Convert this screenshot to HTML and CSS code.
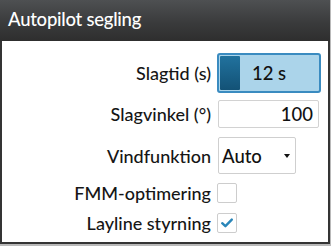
FILE: index.html
```html
<!DOCTYPE html>
<html lang="sv">
<head>
<meta charset="utf-8">
<title>Autopilot segling</title>
<link rel="stylesheet" href="styles.css">
</head>
<body>
<div class="panel">
  <div class="header">Autopilot segling</div>
  <div class="rows">
    <div class="row row-slider">
      <div class="label">Slagtid (s)</div>
      <div class="slider"><span class="handle"></span><span class="slider-value">12 s</span></div>
    </div>
    <div class="row row-num">
      <div class="label">Slagvinkel (°)</div>
      <div class="numbox">100</div>
    </div>
    <div class="row row-select">
      <div class="label">Vindfunktion</div>
      <div class="select"><span>Auto</span><span class="caret"></span></div>
    </div>
    <div class="row row-check">
      <div class="label">FMM-optimering</div>
      <div class="checkbox"></div>
    </div>
    <div class="row row-check row-last">
      <div class="label">Layline styrning</div>
      <div class="checkbox">
        <svg width="18" height="18" viewBox="0 0 18 18"><path d="M4.2 9.2 L7.4 12.2 L13.8 5.6" fill="none" stroke="#2a86b9" stroke-width="2.4" stroke-linecap="round" stroke-linejoin="round"/></svg>
      </div>
    </div>
  </div>
</div>
</body>
</html>
```

FILE: styles.css
```css
* { box-sizing: border-box; }
html, body { margin: 0; padding: 0; }
body {
  width: 331px;
  height: 246px;
  background: #b9b9b9;
  font-family: Lato, "Noto Sans", sans-serif;
  font-weight: 500;
  overflow: hidden;
}
.panel {
  width: 330px;
  height: 244px;
  background: #ffffff;
  border-left: 2px solid #343434;
  border-right: 2px solid #343434;
  border-bottom: 2px solid #343434;
}
.header {
  height: 41px;
  margin: 0 -2px;
  padding: 6px 0 0 8px;
  background: linear-gradient(#4e5052, #3a3b3c 55%, #2e2e2e);
  color: #ffffff;
  font-size: 18.5px;
  letter-spacing: -0.25px;
  line-height: 26px;
}
.rows {
  display: flex;
  flex-direction: column;
  gap: 9px;
  padding-top: 12px;
}
.row {
  display: flex;
  align-items: center;
  gap: 6px;
}
.row-num { margin-top: -2px; }
.row-last { margin-top: 1px; }
.label {
  width: 209px;
  text-align: right;
  color: #161616;
  font-size: 18px;
  line-height: 20px;
}
.slider {
  position: relative;
  width: 104px;
  height: 40px;
  border: 2px solid #3a8bc0;
  border-radius: 3px;
  background: #abd4ea;
  display: flex;
  align-items: center;
  justify-content: center;
  padding: 1px;
}
.handle {
  position: absolute;
  left: 1px;
  top: 1px;
  bottom: 1px;
  width: 20px;
  background: linear-gradient(#21729e, #135276);
  border-radius: 1px;
}
.slider-value {
  font-size: 18.5px;
  color: #111111;
}
.numbox {
  margin-left: 1px;
  width: 101px;
  height: 28px;
  border: 1px solid #d2d2d2;
  border-radius: 2px;
  background: #fff;
  text-align: right;
  padding-right: 5px;
  font-size: 18.5px;
  line-height: 26px;
  color: #111;
}
.select {
  margin-left: 1px;
  width: 78px;
  height: 37px;
  border: 1px solid #cfcfcf;
  border-radius: 2px;
  display: flex;
  align-items: center;
  justify-content: space-between;
  padding: 0 5px 0 3px;
  font-size: 18.5px;
  color: #111;
}
.caret {
  width: 0;
  height: 0;
  border-left: 3.5px solid transparent;
  border-right: 3.5px solid transparent;
  border-top: 4px solid #111;
  margin-top: 1px;
}
.checkbox {
  width: 20px;
  height: 20px;
  border: 1px solid #cdcdcd;
  border-radius: 2px;
  background: #fff;
  display: flex;
  align-items: center;
  justify-content: center;
}
.checkbox svg { display: block; }
```
